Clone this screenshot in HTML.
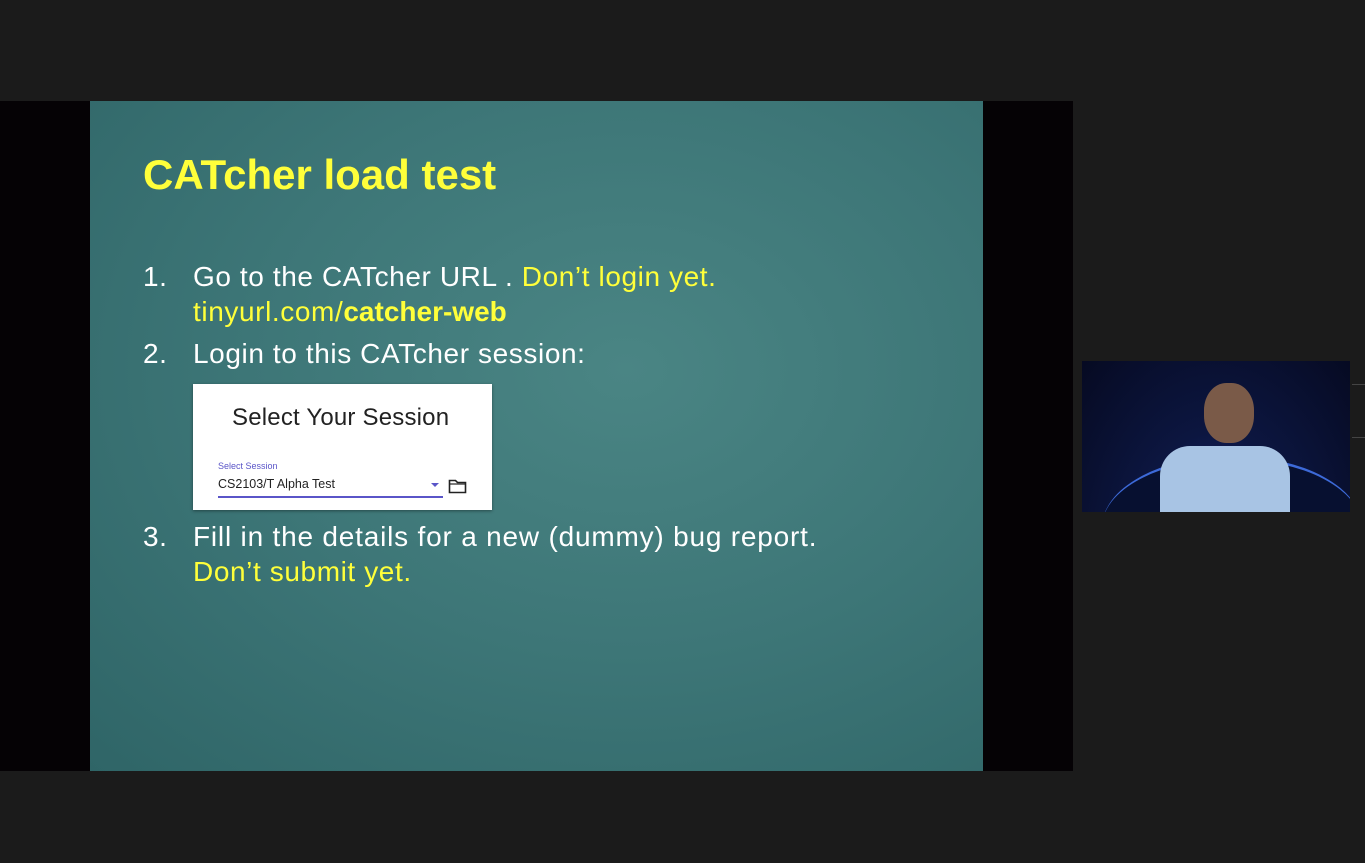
<!DOCTYPE html>
<html><head><style>
body{margin:0;width:1365px;height:863px;background:#1b1b1b;position:relative;overflow:hidden;font-family:"Liberation Sans",sans-serif}
.band{position:absolute;left:0;top:101px;width:1073px;height:670px;background:#050205}
.slide{position:absolute;left:90px;top:101px;width:893px;height:670px;background:radial-gradient(ellipse at 60% 40%,#4a8584 0%,#3d7677 50%,#2f6567 100%)}
.t{position:absolute;color:#fff;font-size:28px;white-space:nowrap;letter-spacing:0.6px}
.y{color:#ffff3a}
.title{position:absolute;left:53px;top:50px;font-size:42px;font-weight:bold;color:#ffff3a;letter-spacing:0px}
.card{position:absolute;left:103px;top:283px;width:299px;height:126px;background:#fff;box-shadow:0 1px 3px rgba(0,0,0,.4)}
.cam{position:absolute;left:1082px;top:361px;width:268px;height:151px;background:radial-gradient(ellipse at 50% 130%,#1b2f8a 0%,#0c1640 45%,#060a22 100%);overflow:hidden}
</style></head><body>
<div class="band"></div>
<div class="slide">
<div class="title">CATcher load test</div>
<div class="t" style="left:53px;top:160px">1.</div>
<div class="t" style="left:103px;top:160px">Go to the CATcher URL . <span class="y">Don’t login yet.</span></div>
<div class="t y" style="left:103px;top:195px">tinyurl.com/<b style="letter-spacing:0">catcher-web</b></div>
<div class="t" style="left:53px;top:237px">2.</div>
<div class="t" style="left:103px;top:237px">Login to this CATcher session:</div>
<div class="card">
<div style="position:absolute;left:39px;top:20px;font-size:24px;letter-spacing:0.2px;color:#222">Select Your Session</div>
<div style="position:absolute;left:25px;top:77px;font-size:9px;color:#5a55c8">Select Session</div>
<div style="position:absolute;left:25px;top:93px;font-size:12.5px;color:#222">CS2103/T Alpha Test</div>
<div style="position:absolute;left:25px;top:112px;width:225px;height:2px;background:#5a55c8"></div>
<div style="position:absolute;left:238px;top:99px;width:0;height:0;border-left:4px solid transparent;border-right:4px solid transparent;border-top:4px solid #5a55c8"></div>
<svg style="position:absolute;left:255px;top:94px" width="19" height="16" viewBox="0 0 19 16"><path d="M1.5 2.5h6l2 2h8v10h-16z" fill="none" stroke="#222" stroke-width="1.6"/><path d="M1.5 6h16" stroke="#222" stroke-width="1.2"/></svg>
</div>
<div class="t" style="left:53px;top:420px">3.</div>
<div class="t" style="left:103px;top:420px;letter-spacing:0.8px">Fill in the details for a new (dummy) bug report.</div>
<div class="t y" style="left:103px;top:455px">Don’t submit yet.</div>
</div>
<div class="cam">
<div style="position:absolute;left:20px;top:95px;width:260px;height:140px;border-radius:50%;border-top:3px solid #3d6ad8;background:#071030"></div>
<div style="position:absolute;left:122px;top:22px;width:50px;height:60px;border-radius:45%;background:#7a5a48"></div>
<div style="position:absolute;left:78px;top:85px;width:130px;height:80px;border-radius:30px 30px 0 0;background:#a8c4e4"></div>
</div>
<div style="position:absolute;left:1352px;top:384px;width:13px;height:1px;background:#444"></div>
<div style="position:absolute;left:1352px;top:437px;width:13px;height:1px;background:#444"></div>
</body></html>
